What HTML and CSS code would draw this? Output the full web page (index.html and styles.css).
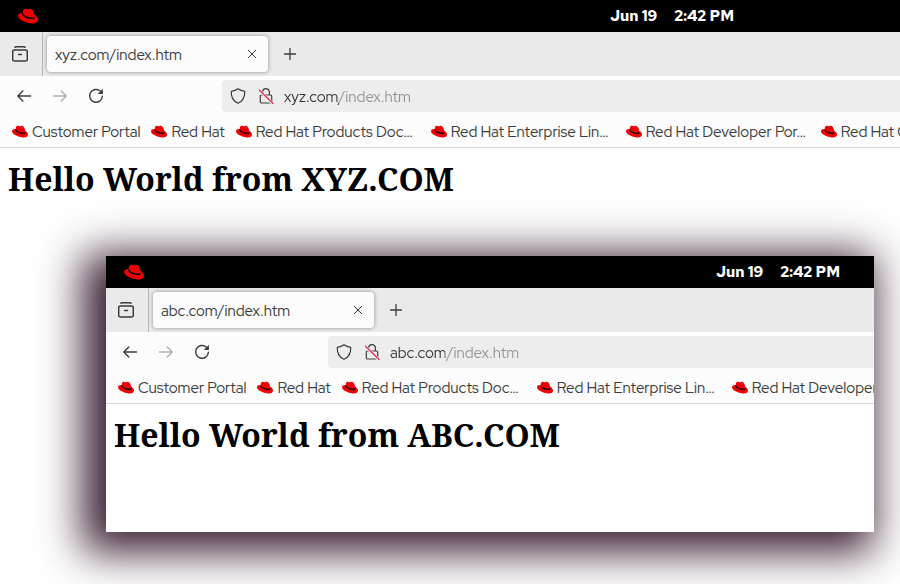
FILE: index.html
```html
<!DOCTYPE html>
<html lang="en">
<head>
<meta charset="utf-8">
<title>Hello World</title>
<link rel="stylesheet" href="styles.css">
</head>
<body>
<svg class="sprite" aria-hidden="true">
  <symbol id="hat" viewBox="0 0 20 16">
    <path fill="#f00000" d="M4.600 5C4.900 2.800 5.400 1 7 .8c1.200-.2 2 .5 2.900.5.900 0 1.300-.8 2.500-.6 2 .3 3.400 2.600 4.100 6.300 2.100 1.300 3.500 2.900 3.500 4.700 0 2.800-2.800 4-6.500 3.700C7.600 15 .2 11.700 0 7.800c0-1.900 1.900-3 4.600-2.800z"/>
    <path fill="none" stroke="#000" stroke-width="1.500" d="M4.500 5.600c.6 3.100 7.800 5.800 12 4.100"/>
  </symbol>
  <symbol id="archive" viewBox="0 0 16 16">
    <path fill="none" stroke="currentColor" stroke-width="1.500" stroke-linecap="round" d="M3 1.300c.3-.4.700-.6 1.300-.6h7.400c.6 0 1 .2 1.300.6M2.300 3.900h11.400c1 0 1.600.6 1.600 1.600v7.900c0 1-.6 1.600-1.600 1.600H2.300c-1 0-1.600-.6-1.600-1.600V5.500c0-1 .6-1.600 1.600-1.600zM6.600 8.500h2.800"/>
  </symbol>
  <symbol id="close" viewBox="0 0 10 10">
    <path fill="none" stroke="currentColor" stroke-width="1" d="M1 1l8 8M9 1L1 9"/>
  </symbol>
  <symbol id="plus" viewBox="0 0 14 14">
    <path fill="none" stroke="currentColor" stroke-width="1.300" stroke-linecap="round" d="M7 1.500v11M1.500 7h11"/>
  </symbol>
  <symbol id="back" viewBox="0 0 16 16">
    <path fill="none" stroke="currentColor" stroke-width="1.400" stroke-linecap="round" stroke-linejoin="round" d="M14.500 8H1.800M6.800 3l-5 5 5 5"/>
  </symbol>
  <symbol id="forward" viewBox="0 0 16 16">
    <path fill="none" stroke="currentColor" stroke-width="1.400" stroke-linecap="round" stroke-linejoin="round" d="M1.500 8h12.700M9.200 3l5 5-5 5"/>
  </symbol>
  <symbol id="reload" viewBox="0 0 16 16">
    <path fill="none" stroke="currentColor" stroke-width="1.400" stroke-linecap="round" d="M12.300 3.100A6.400 6.400 0 1 0 14.400 8.300"/>
    <path fill="currentColor" d="M14.900.8v5.300H9.700z"/>
  </symbol>
  <symbol id="shield" viewBox="0 0 16 16">
    <path fill="none" stroke="currentColor" stroke-width="1.200" stroke-linejoin="round" d="M8 .8c2 1.500 4.200 2.200 6.700 2.500.4 5.500-1.500 9.700-6.700 12C2.800 13 .9 8.800 1.300 3.300 3.800 3 6 2.300 8 .8z"/>
  </symbol>
  <symbol id="lock" viewBox="0 0 16 16">
    <path fill="none" stroke="currentColor" stroke-width="1.200" d="M4.600 7V4.100c0-4.600 6.800-4.600 6.800 0V7M3.500 7h9c.8 0 1.200.4 1.200 1.200v5.600c0 .8-.4 1.200-1.200 1.200h-9c-.8 0-1.200-.4-1.200-1.200V8.200C2.300 7.400 2.700 7 3.500 7z"/>
    <path stroke="#ededed" stroke-width="3" d="M1.500 2.500l13 13"/>
    <path stroke="#e22850" stroke-width="1.200" stroke-linecap="round" d="M1.500 2.200l13.500 13.300"/>
  </symbol>
</svg>

<main class="window">
  <header class="topbar">
    <svg class="topbar-hat"><use href="#hat"/></svg>
    <div class="clock"><span>Jun 19</span><time>2:42 PM</time></div>
  </header>
  <div class="tabs">
    <button class="archive" aria-label="Recent browsing"><svg class="icon"><use href="#archive"/></svg></button>
    <div class="tab"><span>xyz.com/index.htm</span><button aria-label="Close tab"><svg class="icon-close"><use href="#close"/></svg></button></div>
    <button class="new-tab" aria-label="New tab"><svg class="icon-plus"><use href="#plus"/></svg></button>
  </div>
  <div class="toolbar">
    <div class="nav">
      <button aria-label="Back"><svg class="icon"><use href="#back"/></svg></button>
      <button aria-label="Forward" disabled><svg class="icon"><use href="#forward"/></svg></button>
      <button aria-label="Reload"><svg class="icon"><use href="#reload"/></svg></button>
    </div>
    <div class="address">
      <svg class="icon"><use href="#shield"/></svg>
      <svg class="icon"><use href="#lock"/></svg>
      <input class="url" type="text" aria-label="Address" value="xyz.com/index.htm">
    </div>
  </div>
  <nav class="bookmarks">
    <a href="#"><svg class="icon-hat"><use href="#hat"/></svg><span>Customer Portal</span></a>
    <a href="#"><svg class="icon-hat"><use href="#hat"/></svg><span>Red Hat</span></a>
    <a class="long" href="#"><svg class="icon-hat"><use href="#hat"/></svg><span>Red Hat Products Doc…</span></a>
    <a class="long" href="#"><svg class="icon-hat"><use href="#hat"/></svg><span>Red Hat Enterprise Lin…</span></a>
    <a class="long" href="#"><svg class="icon-hat"><use href="#hat"/></svg><span>Red Hat Developer Por…</span></a>
    <a class="long" href="#"><svg class="icon-hat"><use href="#hat"/></svg><span>Red Hat C</span></a>
  </nav>
  <h1>Hello World from XYZ.COM</h1>
</main>

<section class="window floating">
  <header class="topbar">
    <svg class="topbar-hat"><use href="#hat"/></svg>
    <div class="clock"><span>Jun 19</span><time>2:42 PM</time></div>
  </header>
  <div class="tabs">
    <button class="archive" aria-label="Recent browsing"><svg class="icon"><use href="#archive"/></svg></button>
    <div class="tab"><span>abc.com/index.htm</span><button aria-label="Close tab"><svg class="icon-close"><use href="#close"/></svg></button></div>
    <button class="new-tab" aria-label="New tab"><svg class="icon-plus"><use href="#plus"/></svg></button>
  </div>
  <div class="toolbar">
    <div class="nav">
      <button aria-label="Back"><svg class="icon"><use href="#back"/></svg></button>
      <button aria-label="Forward" disabled><svg class="icon"><use href="#forward"/></svg></button>
      <button aria-label="Reload"><svg class="icon"><use href="#reload"/></svg></button>
    </div>
    <div class="address">
      <svg class="icon"><use href="#shield"/></svg>
      <svg class="icon"><use href="#lock"/></svg>
      <input class="url" type="text" aria-label="Address" value="abc.com/index.htm">
    </div>
  </div>
  <nav class="bookmarks">
    <a href="#"><svg class="icon-hat"><use href="#hat"/></svg><span>Customer Portal</span></a>
    <a href="#"><svg class="icon-hat"><use href="#hat"/></svg><span>Red Hat</span></a>
    <a class="long" href="#"><svg class="icon-hat"><use href="#hat"/></svg><span>Red Hat Products Doc…</span></a>
    <a class="long" href="#"><svg class="icon-hat"><use href="#hat"/></svg><span>Red Hat Enterprise Lin…</span></a>
    <a class="long" href="#"><svg class="icon-hat"><use href="#hat"/></svg><span>Red Hat Developer</span></a>
  </nav>
  <h1>Hello World from ABC.COM</h1>
</section>
</body>
</html>
```
FILE: styles.css
```css
* { box-sizing: border-box; }

body {
  margin: 0;
  position: relative;
  min-height: 100vh;
  overflow: hidden;
  background: #fff;
  color: #3b3b3b;
  font: 15px/20px "Red Hat Display", "Red Hat Text", Inter, sans-serif;
}

.sprite { position: absolute; width: 0; height: 0; }

svg { display: block; flex: none; }

button {
  display: grid;
  place-items: center;
  flex: none;
  padding: 0;
  border: 0;
  background: none;
  color: inherit;
}

.window { overflow: hidden; background: #fff; }

.floating {
  position: absolute;
  top: 256px;
  left: 106px;
  right: 26px;
  padding-bottom: 66px;
  box-shadow: -12px 9px 40px 11px #3a1f33;
}

.topbar {
  display: flex;
  align-items: center;
  height: 32px;
  padding-left: 18px;
  background: #000;
  color: #fff;
}
.topbar-hat { width: 20px; height: 16px; }
.clock {
  display: flex;
  gap: 17px;
  margin-left: 572px;
  font-family: "Red Hat Text", Inter, sans-serif;
  font-weight: 700;
  white-space: nowrap;
}

.tabs {
  display: flex;
  align-items: center;
  height: 44px;
  background: #eaeaea;
}
.archive {
  width: 43px;
  height: 44px;
  padding-right: 2px;
  border-right: 1px solid #b4b4b4;
}
.tab {
  display: flex;
  align-items: center;
  justify-content: space-between;
  width: 221px;
  height: 36px;
  margin-left: 4px;
  padding: 0 11px 0 8px;
  border-radius: 4px;
  background: #fcfcfc;
  box-shadow: 0 0 4px rgba(0, 0, 0, .4);
}
.tab span { padding-top: 2px; }
.new-tab { margin-left: 15px; }

.icon { width: 16px; height: 16px; }
.icon-close { width: 10px; height: 10px; }
.icon-plus { width: 14px; height: 14px; }
.icon-hat { width: 16px; height: 13px; }

.toolbar {
  display: flex;
  align-items: center;
  height: 40px;
  background: #fcfcfc;
}
.nav {
  display: flex;
  gap: 20px;
  flex: none;
  width: 222px;
  padding-left: 16px;
}
.nav button:disabled { color: #b0b0b0; }
.address {
  display: flex;
  align-items: center;
  gap: 10px;
  flex: 1;
  height: 32px;
  padding-left: 8px;
  border-radius: 4px 0 0 4px;
  background: #ededed;
}
.address .icon + .icon { margin-left: 2px; }
.url {
  flex: 1;
  min-width: 0;
  padding: 2px 0 0;
  border: 0;
  outline: 0;
  background: linear-gradient(to right, #333 55px, #929292 55px);
  -webkit-background-clip: text;
  background-clip: text;
  color: transparent;
  font: inherit;
}

.bookmarks {
  display: flex;
  align-items: center;
  gap: 11px;
  height: 32px;
  padding-left: 12px;
  overflow: hidden;
  border-bottom: 1px solid #dadada;
  background: #fcfcfc;
  white-space: nowrap;
}
.bookmarks a {
  display: flex;
  align-items: center;
  gap: 4px;
  flex: none;
  color: inherit;
  text-decoration: none;
}
.bookmarks .long { width: 184px; }

h1 {
  margin: 8px;
  color: #000;
  font: 700 32px/46px "Noto Serif", "Droid Serif", "Liberation Serif", serif;
}
```
